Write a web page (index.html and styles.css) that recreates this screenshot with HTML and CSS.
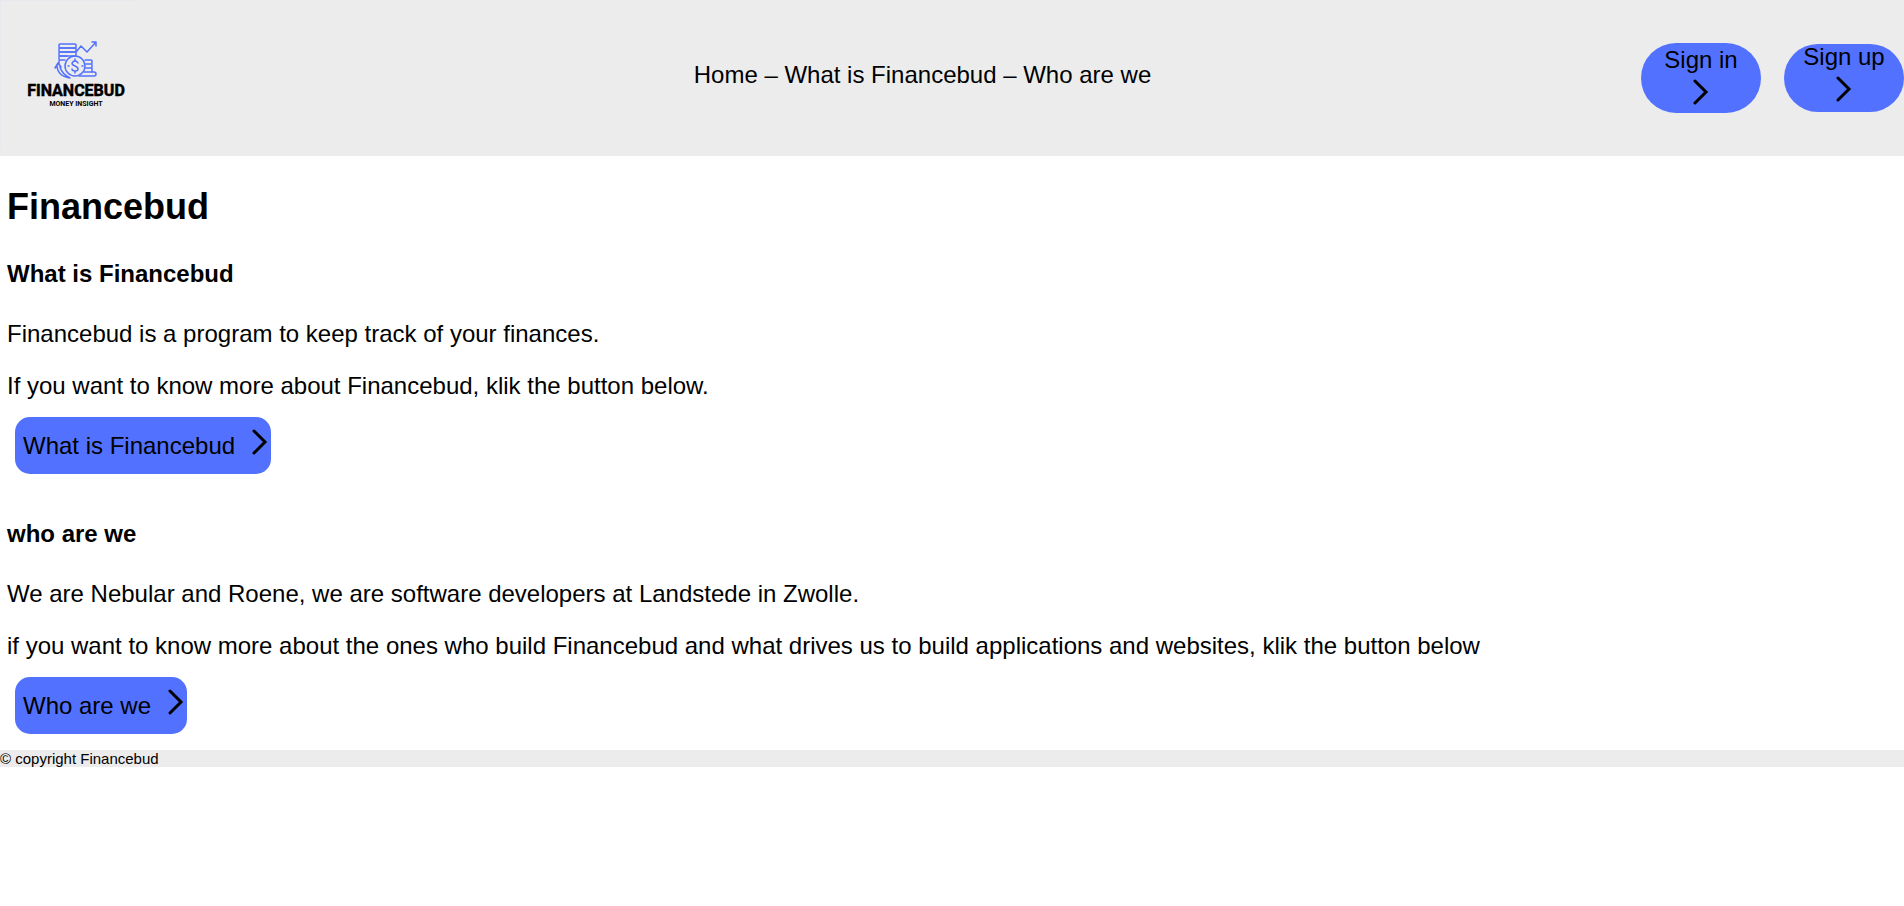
FILE: index.html
```
<!DOCTYPE html>
<html lang="en">
	<head>
		<meta charset="utf-8">
		<meta name="viewport" content="width=device-width, initial-scale=1">
		<title>Financebud</title>
		<link rel="stylesheet" href="styles.css">
	</head>
	<body>
		<header class="header">
			<a class="logo" href="#">
				<svg width="150" height="150" viewBox="0 0 150 150" role="img" aria-label="Financebud">
					<path class="logo-edge" d="M0 150V0H140"/>
					<g class="logo-lines">
						<!-- tall stack of coins -->
						<rect x="59" y="44" width="17" height="4" rx="1"/>
						<rect x="59" y="48" width="17" height="4" rx="1"/>
						<rect x="59" y="52" width="17" height="4" rx="1"/>
						<path d="M67 56H60q-1 0-1 1v2q0 1 1 1H65M60 60q-1 0-1 1v3"/>
						<!-- graph -->
						<path d="M76 52l5-6 6 6 9-10M92 42h4v4"/>
						<!-- small stack -->
						<path d="M85 60h6q1 0 1 1v2q0 1-1 1h-5M86 64h5q1 0 1 1v2q0 1-1 1h-5M92 68v4"/>
						<path d="M84 72h10q2 0 2 2t-2 2H79"/>
						<!-- big coin -->
						<circle cx="75" cy="66" r="10"/>
						<path d="M78 63q-1-2-3-2t-3 2q0 2 3 3t3 3-3 2-3-2M75 59v2M75 71v2M68 66h1M82 66h1"/>
						<!-- arrow -->
						<path d="M55 68l3-5 3 4M57 65q0 11 13 13M60 67q2 7 10 11"/>
					</g>
					<text class="logo-name" x="76" y="96">FINANCEBUD</text>
					<text class="logo-sub" x="76" y="106">MONEY INSIGHT</text>
				</svg>
			</a>
			<nav class="nav">
				<a href="#">Home</a> – <a href="#what">What is Financebud</a> – <a href="#who">Who are we</a>
			</nav>
			<div class="account">
				<button class="sign signin" type="button">Sign in
					<svg class="arrow" viewBox="0 0 16 26"><path d="M2 2l11 11L2 24"/></svg>
				</button>
				<button class="sign signup" type="button">Sign up
					<svg class="arrow" viewBox="0 0 16 26"><path d="M2 2l11 11L2 24"/></svg>
				</button>
			</div>
		</header>

		<main class="main">
			<h1>Financebud</h1>
			<section id="what">
				<h3>What is Financebud</h3>
				<p>Financebud is a program to keep track of your finances.</p>
				<p>If you want to know more about Financebud, klik the button below.</p>
				<button class="more" type="button">What is Financebud<svg class="arrow" viewBox="0 0 16 26"><path d="M2 2l11 11L2 24"/></svg></button>
			</section>
			<section id="who">
				<h3>who are we</h3>
				<p>We are Nebular and Roene, we are software developers at Landstede in Zwolle.</p>
				<p>if you want to know more about the ones who build Financebud and what drives us to build applications and websites, klik the button below</p>
				<button class="more" type="button">Who are we<svg class="arrow" viewBox="0 0 16 26"><path d="M2 2l11 11L2 24"/></svg></button>
			</section>
		</main>

		<footer class="footer">© copyright Financebud</footer>
	</body>
</html>
```
FILE: styles.css
```
*{
	box-sizing: border-box;
}
body{
	margin: 0;
	font: 24px/28px Arial, "Liberation Sans", sans-serif;
	color: #000;
	background: #fff;
}
a{
	color: #000;
	text-decoration: none;
}
button{
	border: 0;
	font: inherit;
	color: #000;
	background: #5271ff;
	cursor: pointer;
}

/* header */
.header{
	display: flex;
	align-items: center;
	background: #ececec;
}
.logo{
	padding-bottom: 6px;
}
.logo svg{
	display: block;
}
.logo-edge{
	fill: none;
	stroke: #e8e8ee;
	stroke-width: 2;
}
.logo-lines{
	fill: none;
	stroke: #5271ff;
	stroke-width: 1.5;
	stroke-linecap: round;
	stroke-linejoin: round;
}
.logo-name,
.logo-sub{
	font-family: Roboto, sans-serif;
	font-weight: 700;
	text-anchor: middle;
}
.logo-name{
	font-size: 16px;
	stroke: #000;
	stroke-width: 0.5;
}
.logo-sub{
	font-size: 7px;
}
.nav{
	flex: 1;
	padding: 0 0 6px 54px;
	text-align: center;
}
.account{
	display: flex;
	align-items: center;
	gap: 23px;
}
.sign{
	display: flex;
	flex-direction: column;
	align-items: center;
	gap: 6px;
	width: 120px;
	border-radius: 35px;
	line-height: 26px;
}
.signin{
	padding: 4px 0 8px;
}
.signup{
	padding: 0 0 10px;
}
.arrow{
	width: 16px;
	height: 26px;
	fill: none;
	stroke: #000;
	stroke-width: 3;
	stroke-linecap: round;
}

/* content */
.main{
	padding: 30px 7px 16px;
}
h1{
	margin: 0 0 33px;
	font-size: 36px;
	line-height: 41px;
}
h3{
	margin: 0 0 32px;
	font-size: 24px;
}
p{
	margin: 0;
}
p + p{
	margin-top: 24px;
}
section + section{
	margin-top: 46px;
}
.more{
	display: block;
	margin: 17px 0 0 8px;
	padding: 12px 3px 14px 8px;
	border-radius: 15px;
}
.more .arrow{
	margin-left: 17px;
	vertical-align: -1px;
}

.footer{
	font-size: 15px;
	line-height: 17px;
	background: #ececec;
}
```
